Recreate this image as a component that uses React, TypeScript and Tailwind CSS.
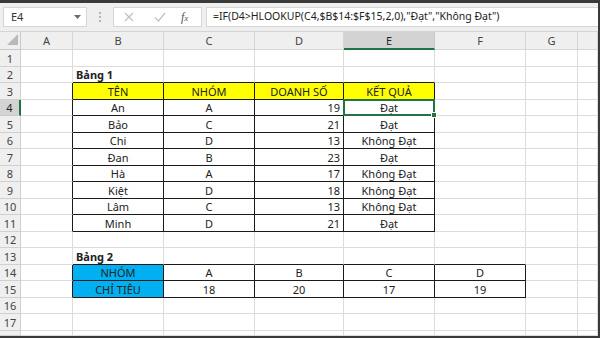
import React from "react";

type Cell = {
  text: string;
  align?: "left" | "center" | "right";
  bold?: boolean;
  bg?: "yellow" | "blue";
};

const COLS = ["A", "B", "C", "D", "E", "F", "G", ""];

const DATA: Record<string, Cell> = {};
const put = (r: number, c: number, cell: Cell) => {
  DATA[`${r}-${c}`] = cell;
};

put(2, 1, { text: "Bảng 1", align: "left", bold: true });
["TÊN", "NHÓM", "DOANH SỐ", "KẾT QUẢ"].forEach((t, i) =>
  put(3, i + 1, { text: t, bg: "yellow" })
);
const rows1: [string, string, number, string][] = [
  ["An", "A", 19, "Đạt"],
  ["Bảo", "C", 21, "Đạt"],
  ["Chi", "D", 13, "Không Đạt"],
  ["Đan", "B", 23, "Đạt"],
  ["Hà", "A", 17, "Không Đạt"],
  ["Kiệt", "D", 18, "Không Đạt"],
  ["Lâm", "C", 13, "Không Đạt"],
  ["Minh", "D", 21, "Đạt"],
];
rows1.forEach(([name, group, sales, result], i) => {
  put(4 + i, 1, { text: name });
  put(4 + i, 2, { text: group });
  put(4 + i, 3, { text: String(sales), align: "right" });
  put(4 + i, 4, { text: result });
});
put(13, 1, { text: "Bảng 2", align: "left", bold: true });
put(14, 1, { text: "NHÓM", bg: "blue" });
put(15, 1, { text: "CHỈ TIÊU", bg: "blue" });
["A", "B", "C", "D"].forEach((g, i) => put(14, i + 2, { text: g }));
[18, 20, 17, 19].forEach((n, i) => put(15, i + 2, { text: String(n) }));

const inTable = (r: number, c: number) =>
  (r >= 3 && r <= 11 && c >= 1 && c <= 4) ||
  (r >= 14 && r <= 15 && c >= 1 && c <= 5);

const GRID =
  "grid grid-cols-[21px_52px_91px_91px_89px_91px_91px_52px_1fr] leading-[13px]";

function CornerTriangle() {
  return (
    <svg width="11" height="11" viewBox="0 0 11 11" className="absolute left-[7px] bottom-[4px]">
      <polygon points="11,0 11,11 0,11" fill="#b9b9b9" />
    </svg>
  );
}

function FormulaBar() {
  return (
    <div className="h-[29px] flex items-center pl-[3px] bg-[#efefef] border-b border-[#d4d4d4]">
      <div className="w-[84px] h-[20px] bg-white border border-[#d6d6d6] flex items-center justify-between pl-[7px] pr-[5px] text-[11px] text-[#333]">
        <span>E4</span>
        <svg width="7" height="4" viewBox="0 0 7 4">
          <polygon points="0,0 7,0 3.5,4" fill="#6b6b6b" />
        </svg>
      </div>
      <div className="w-[26px] flex flex-col items-center gap-[2px]">
        <span className="w-[2px] h-[2px] bg-[#b5b5b5]" />
        <span className="w-[2px] h-[2px] bg-[#b5b5b5]" />
        <span className="w-[2px] h-[2px] bg-[#b5b5b5]" />
      </div>
      <div className="w-[89px] h-[20px] bg-white border border-[#d6d6d6] flex items-center pl-[10px]">
        <svg width="10" height="10" viewBox="0 0 10 10">
          <path d="M1 1 L9 9 M9 1 L1 9" stroke="#c2c2c2" strokeWidth="1.3" />
        </svg>
        <svg width="12" height="10" viewBox="0 0 12 10" className="ml-[20px]">
          <path d="M1 5.5 L4.5 9 L11 1" stroke="#c2c2c2" strokeWidth="1.3" fill="none" />
        </svg>
        <span className="ml-[15px] text-[12px] italic text-[#555] font-['Liberation_Serif',serif]">
          f<span className="text-[9px]">x</span>
        </span>
      </div>
      <div className="ml-[4px] flex-1 h-[20px] bg-white border border-r-0 border-[#d6d6d6] flex items-center pl-[6px] text-[10.5px] text-[#222] whitespace-nowrap overflow-hidden">
        =IF(D4&gt;HLOOKUP(C4,$B$14:$F$15,2,0),"Đạt","Không Đạt")
      </div>
    </div>
  );
}

function HeaderRow() {
  return (
    <div className={`${GRID} h-[18px] bg-[#efefef] text-[11px] text-[#444]`}>
      <div className="relative border-r border-b border-[#c9c9c9]">
        <CornerTriangle />
      </div>
      {COLS.map((c, i) =>
        c === "E" ? (
          <div
            key={i}
            className="flex items-center justify-center bg-[#d3d3d3] border-r border-[#c9c9c9] border-b-2 border-b-[#217346] text-[#262626]"
          >
            {c}
          </div>
        ) : (
          <div
            key={i}
            className="flex items-center justify-center border-r border-b border-[#d6d6d6]"
          >
            {c}
          </div>
        )
      )}
    </div>
  );
}

function SheetRow({ r }: { r: number }) {
  const heightCls =
    r > 17 ? "h-[5px] overflow-hidden" : r % 2 === 1 ? "h-[17px]" : "h-[16px]";
  return (
    <div className={`${GRID} ${heightCls} text-[11px]`}>
      {r === 4 ? (
        <div className="flex items-center justify-center bg-[#d3d3d3] border-b border-[#c9c9c9] border-r-2 border-r-[#217346] text-[#262626]">
          {r}
        </div>
      ) : (
        <div className="flex items-center justify-center bg-[#efefef] border-r border-b border-[#d0d0d0] text-[#444] overflow-hidden">
          {r > 17 ? "" : r}
        </div>
      )}
      {COLS.map((_, c) => {
        const cell = DATA[`${r}-${c}`];
        const blackRight = inTable(r, c) || inTable(r, c + 1);
        const blackBottom = inTable(r, c) || inTable(r + 1, c);
        const bg =
          cell?.bg === "yellow"
            ? "bg-[#ffff00]"
            : cell?.bg === "blue"
            ? "bg-[#00b0f0] text-[#133c62]"
            : "bg-white";
        const align =
          cell?.align === "left"
            ? "justify-start pl-[3px]"
            : cell?.align === "right"
            ? "justify-end pr-[3px]"
            : "justify-center";
        return (
          <div
            key={c}
            className={`relative min-h-0 flex items-center whitespace-nowrap text-[#222] border-r border-b ${
              blackRight ? "border-r-[#1a1a1a]" : "border-r-[#dcdcdc]"
            } ${blackBottom ? "border-b-[#1a1a1a]" : "border-b-[#dcdcdc]"} ${bg} ${align} ${
              cell?.bold ? "font-bold" : ""
            }`}
          >
            {cell?.text}
            {r === 4 && c === 4 && (
              <>
                <div className="absolute -left-[1px] -top-[1px] -right-[1px] -bottom-[1px] border-2 border-[#217346] z-10 pointer-events-none" />
                <div className="absolute -right-[3px] -bottom-[3px] w-[6px] h-[6px] bg-[#217346] border border-white z-20" />
              </>
            )}
          </div>
        );
      })}
    </div>
  );
}

export default function App() {
  const rows = Array.from({ length: 18 }, (_, i) => i + 1);
  return (
    <div className="w-[600px] h-[338px] overflow-hidden bg-white border-t-[3px] border-r-2 border-b-2 border-[#3a3a3a] flex flex-col font-['Noto_Sans','Liberation_Sans',sans-serif]">
      <FormulaBar />
      <HeaderRow />
      {rows.map((r) => (
        <SheetRow key={r} r={r} />
      ))}
    </div>
  );
}
